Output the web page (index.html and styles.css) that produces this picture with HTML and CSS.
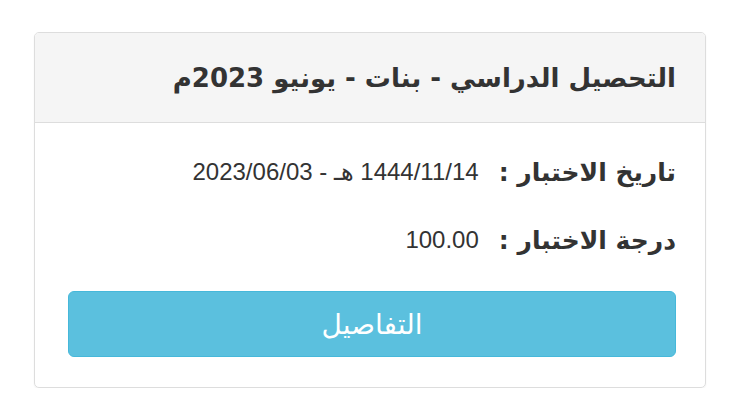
FILE: index.html
```html
<!DOCTYPE html>
<html lang="ar" dir="rtl">
<head>
  <meta charset="UTF-8" />
  <title>التحصيل الدراسي</title>
  <meta name="viewport" content="width=device-width, initial-scale=1.0" />
  <link rel="stylesheet" href="styles.css">
</head>
<body>
  <div class="panel">
    <div class="panel-heading">التحصيل الدراسي - بنات - يونيو 2023م</div>
    <div class="panel-body">
      <div class="row">
        <span class="label">تاريخ الاختبار :</span>
        <span class="value">1444/11/14 هـ - 2023/06/03</span>
      </div>
      <div class="row">
        <span class="label">درجة الاختبار :</span>
        <span class="value">100.00</span>
      </div>
      <a class="btn-info" href="#">التفاصيل</a>
    </div>
  </div>
</body>
</html>
```

FILE: styles.css
```css
* {
  box-sizing: border-box;
}

body {
  margin: 0;
  background: #fff;
  color: #333;
  font-family: "DejaVu Sans", sans-serif;
}

.panel {
  margin: 32px 30px 0 34px;
  border: 1px solid #ddd;
  border-radius: 5px;
  box-shadow: 0 1px 2px rgba(0, 0, 0, 0.06);
  overflow: hidden;
}

.panel-heading {
  height: 90px;
  display: flex;
  align-items: center;
  padding: 0 29px;
  background: #f5f5f5;
  border-bottom: 1px solid #ddd;
  font-size: 26px;
  font-weight: bold;
  color: #333;
}

.panel-body {
  padding: 27px 29px 30px 33px;
}

.row {
  display: flex;
  align-items: center;
  gap: 20px;
  height: 44px;
  margin-bottom: 24px;
}

.label {
  font-size: 25px;
  font-weight: bold;
}

.value {
  font-family: "Liberation Sans", "DejaVu Sans", sans-serif;
  font-size: 24px;
}

.btn-info {
  display: flex;
  align-items: center;
  justify-content: center;
  height: 66px;
  margin-top: 29px;
  background: #5bc0de;
  border: 1px solid #46b8da;
  border-radius: 6px;
  color: #fff;
  font-size: 28px;
  text-decoration: none;
}
```
